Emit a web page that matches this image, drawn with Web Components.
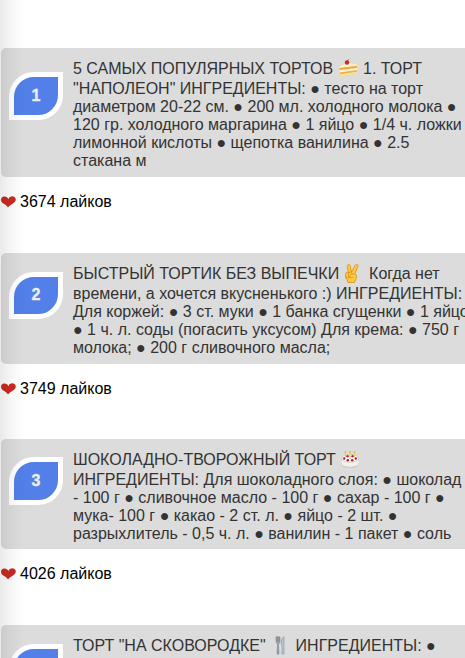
<!DOCTYPE html>
<html lang="ru">
<head>
<meta charset="utf-8">
<title>Рецепты тортов</title>
<style>
  body {
    margin: 0;
    background: #fff;
    font: 16px/18px "Liberation Sans", Arial, sans-serif;
    overflow: hidden;
  }
</style>
</head>
<body>
<recipe-list>
  <recipe-post rank="1" likes="3674" style="--card-height: 129px; --badge-top: 24px; --post-height: 205px">
    <recipe-line first>5 САМЫХ ПОПУЛЯРНЫХ ТОРТОВ <emoji-icon name="cake"></emoji-icon> 1. ТОРТ</recipe-line>
    <recipe-line>"НАПОЛЕОН" ИНГРЕДИЕНТЫ: ● тесто на торт</recipe-line>
    <recipe-line>диаметром 20-22 см. ● 200 мл. холодного молока ●</recipe-line>
    <recipe-line>120 гр. холодного маргарина ● 1 яйцо ● 1/4 ч. ложки</recipe-line>
    <recipe-line>лимонной кислоты ● щепотка ванилина ● 2.5</recipe-line>
    <recipe-line>стакана м</recipe-line>
  </recipe-post>
  <recipe-post rank="2" likes="3749" style="--card-height: 111px; --badge-top: 19px; --badge-height: 47px; --post-height: 186px">
    <recipe-line first>БЫСТРЫЙ ТОРТИК БЕЗ ВЫПЕЧКИ <emoji-icon name="victory"></emoji-icon> Когда нет</recipe-line>
    <recipe-line>времени, а хочется вкусненького :) ИНГРЕДИЕНТЫ:</recipe-line>
    <recipe-line>Для коржей: ● 3 ст. муки ● 1 банка сгущенки ● 1 яйцо</recipe-line>
    <recipe-line>● 1 ч. л. соды (погасить уксусом) Для крема: ● 750 г</recipe-line>
    <recipe-line>молока; ● 200 г сливочного масла;</recipe-line>
  </recipe-post>
  <recipe-post rank="3" likes="4026" style="--card-height: 110px; --badge-top: 18px; --post-height: 186px">
    <recipe-line first>ШОКОЛАДНО-ТВОРОЖНЫЙ ТОРТ <emoji-icon name="birthday"></emoji-icon></recipe-line>
    <recipe-line>ИНГРЕДИЕНТЫ: Для шоколадного слоя: ● шоколад</recipe-line>
    <recipe-line>- 100 г ● сливочное масло - 100 г ● сахар - 100 г ●</recipe-line>
    <recipe-line>мука- 100 г ● какао - 2 ст. л. ● яйцо - 2 шт. ●</recipe-line>
    <recipe-line>разрыхлитель - 0,5 ч. л. ● ванилин - 1 пакет ● соль</recipe-line>
  </recipe-post>
  <recipe-post rank="" style="--card-height: 110px; --badge-top: 19px; --post-height: 186px">
    <recipe-line first>ТОРТ "НА СКОВОРОДКЕ" <emoji-icon name="cutlery"></emoji-icon> ИНГРЕДИЕНТЫ: ●</recipe-line>
  </recipe-post>
</recipe-list>

<script>
class RecipeList extends HTMLElement {
  constructor() {
    super();
    this.attachShadow({ mode: 'open' }).innerHTML = `
      <style>
        :host {
          display: block;
          position: relative;
          box-sizing: border-box;
          height: 658px;
          padding: 48px 0 0 1px;
          overflow: hidden;
        }

        /* soft shade along the left edge of the panel */
        .shade {
          position: absolute;
          inset: 0 auto 0 0;
          width: 26px;
          background: linear-gradient(to right, rgba(0,0,0,.085), rgba(0,0,0,.045) 35%, rgba(0,0,0,.012) 75%, transparent);
          pointer-events: none;
        }
      </style>
      <slot></slot>
      <div class="shade"></div>
    `;
  }
}

class RecipePost extends HTMLElement {
  connectedCallback() {
    const likes = this.getAttribute('likes');
    this.attachShadow({ mode: 'open' }).innerHTML = `
      <style>
        :host {
          display: block;
          height: var(--post-height);
        }

        .card {
          display: flex;
          align-items: flex-start;
          box-sizing: border-box;
          width: 490px;
          height: var(--card-height);
          padding-left: 8px;
          border-radius: 5px;
          background: #dcdcdc;
          color: #333;
        }

        rank-badge { margin-top: var(--badge-top); }

        .text {
          flex: 1;
          padding: 11px 0 0 10px;
        }
      </style>
      <div class="card">
        <rank-badge>${this.getAttribute('rank')}</rank-badge>
        <div class="text"><slot></slot></div>
      </div>
      ${likes ? `<like-counter>${likes} лайков</like-counter>` : ''}
    `;
  }
}

class RankBadge extends HTMLElement {
  constructor() {
    super();
    this.attachShadow({ mode: 'open' }).innerHTML = `
      <style>
        :host {
          display: flex;
          flex: none;
          align-items: center;
          justify-content: center;
          box-sizing: border-box;
          width: 54px;
          height: var(--badge-height, 48px);
          padding-bottom: 1px;
          border: 5px solid #fff;
          border-radius: 25px 0;
          background: #527fe8;
          color: #ececec;
          font: bold 16px/18px "Liberation Sans", Arial, sans-serif;
          -webkit-text-stroke: .4px #ececec;
        }
      </style>
      <slot></slot>
    `;
  }
}

class RecipeLine extends HTMLElement {
  constructor() {
    super();
    this.attachShadow({ mode: 'open' }).innerHTML = `
      <style>
        :host {
          display: block;
          height: 18px;
          line-height: 18px;
          white-space: nowrap;
        }

        /* the line with an emoji is taller than the others */
        :host([first]) {
          height: 21px;
          line-height: 20px;
        }
      </style>
      <slot></slot>
    `;
  }
}

class LikeCounter extends HTMLElement {
  constructor() {
    super();
    this.attachShadow({ mode: 'open' }).innerHTML = `
      <style>
        :host {
          display: flex;
          align-items: center;
          gap: 4px;
          padding-top: 16px;
          color: #000;
        }

        svg { display: block; }
      </style>
      <svg width="15" height="12" viewBox="0 0 15 12">
        <path fill="#cb2a20" d="M7.400 3.200C8 1 10 .2 12 .4c2.200.3 3.200 2.200 2.600 4.100-.9 2.700-4.600 3.600-7.600 6.900-1.700-3-6-3.900-6.800-6.500C-.4 2.800.6.9 2.700.5 4.700.1 6.700 1.100 7.400 3.200z"/>
      </svg>
      <slot></slot>
    `;
  }
}

const EMOJI = {
  cake: `
    <path d="M.5 7.500 9 3 18 5.500V14.500L1.500 18z" fill="#efbd5c"/>
    <path d="M.5 7.500 8.500 3.200 18 5.500V7L.5 9z" fill="#fff0cf"/>
    <path d="M.6 9 18 7V9L.8 11z" fill="#f2a83c"/>
    <path d="M.8 11 18 9V11.300L1 13.500z" fill="#fff3da"/>
    <path d="M1 13.500 18 11.300V12.800L1.200 15.300z" fill="#f0b149"/>
    <path d="M1.200 15.300 18 12.800V14.500L1.500 18z" fill="#f7dfa9"/>
    <circle cx="8" cy="3.500" r="2.200" fill="#d0281d"/>
    <path d="M8 2 9.800.5" stroke="#4c8a34" fill="none"/>`,
  victory: `
    <g transform="translate(-1.500 0)" stroke="#d98b18" stroke-width=".8" fill="#ffc83f">
      <path d="M5 10 3.800 2.500C3.500.3 6.100-.3 6.700 1.700L8 8 11.700 1.200C12.700-.5 15.100.7 14.400 2.600L11.500 9.500C13.500 11 13.500 13.700 12 16L11 18.500H4.500L3.500 15.500C1.300 13 1.600 9.500 5 10z"/>
      <rect x="2" y="8.500" width="3.500" height="5.500" rx="1.700"/>
      <rect x="5" y="8" width="3.300" height="5.300" rx="1.600"/>
      <path d="M11.500 10.200C8.800 9.500 6.500 11.200 6.300 12.400 6.500 14 9 13.200 10 13.200" fill="#ffd45b"/>
    </g>`,
  birthday: `
    <path d="M.7 8V15c1 3.800 15.600 3.800 16.600 0V8z" fill="#c9c6c0"/>
    <path d="M.7 8V14c1 3.600 15.600 3.600 16.600 0V8z" fill="#f3f1ed"/>
    <ellipse cx="9" cy="8.300" rx="8.300" ry="3.900" fill="#fff" stroke="#b9b4ad" stroke-width=".6"/>
    <g fill="#a81f35">
      <circle cx="3.200" cy="8.500" r="1.200"/><circle cx="6.500" cy="6.300" r="1.200"/>
      <circle cx="11.500" cy="6.300" r="1.200"/><circle cx="14.800" cy="8.500" r="1.200"/>
      <circle cx="6.800" cy="10.300" r="1.300"/><circle cx="11.200" cy="10.300" r="1.300"/>
    </g>
    <path d="M4.500 7V3M9 9V3M13.500 7V3" stroke="#e4c886" stroke-width="1.300"/>
    <path d="M4.500 3V1.300M9 3V1M13.500 3V1.300" stroke="#f2c018" stroke-width="1.700"/>`,
  cutlery: `
    <path d="M5 .8V5.500C5 7 6 7.500 6.500 8L6 17.500c0 1 2 1 2 0L7.500 8C8.500 7.500 9 7 9 5.500V.8H8V5H7.500V.8H6.500V5H6V.8z" fill="#9ba1a7" stroke="#777e85" stroke-width=".5"/>
    <path d="M12.500.8C10.300 2.500 10 6 10.500 9.500L11.200 10 10.800 17.500c0 1 2.200 1 2.200 0V.8z" fill="#b9c4cc" stroke="#7c8992" stroke-width=".5"/>`
};

class EmojiIcon extends HTMLElement {
  connectedCallback() {
    this.attachShadow({ mode: 'open' }).innerHTML = `
      <style>
        :host {
          display: inline-block;
          width: 20px;
          height: 19px;
          margin-right: 1px;
          vertical-align: -4px;
          line-height: 0;
        }

        svg { margin-left: 1px; overflow: visible; }
      </style>
      <svg width="18" height="19" viewBox="0 0 18 19">${EMOJI[this.getAttribute('name')]}</svg>
    `;
  }
}

customElements.define('recipe-list', RecipeList);
customElements.define('recipe-post', RecipePost);
customElements.define('rank-badge', RankBadge);
customElements.define('recipe-line', RecipeLine);
customElements.define('like-counter', LikeCounter);
customElements.define('emoji-icon', EmojiIcon);
</script>
</body>
</html>
